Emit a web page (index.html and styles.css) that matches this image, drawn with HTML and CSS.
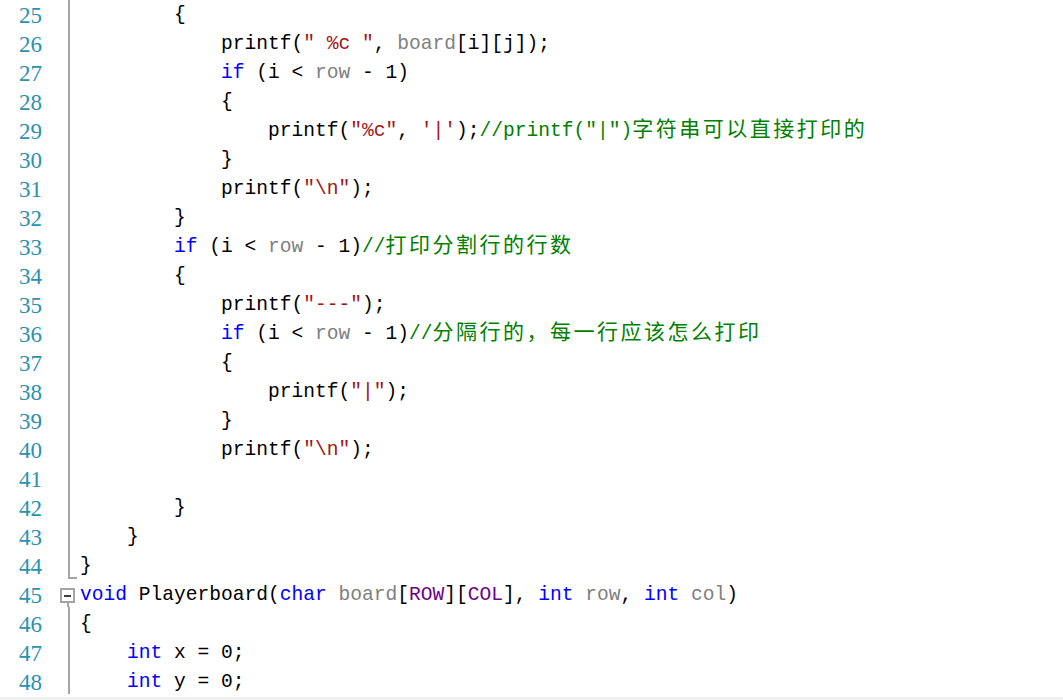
FILE: index.html
```html
<!DOCTYPE html>
<html lang="zh-CN">
<head>
<meta charset="utf-8">
<title>Editor</title>
<link rel="stylesheet" href="styles.css">
</head>
<body>
<div class="editor">
  <div class="row"><span class="ln">25</span><span class="fold"><span class="bar"></span></span><span class="code">        {</span></div>
  <div class="row"><span class="ln">26</span><span class="fold"><span class="bar"></span></span><span class="code">            printf(<span class="s">" %c "</span>, <span class="p">board</span>[i][j]);</span></div>
  <div class="row"><span class="ln">27</span><span class="fold"><span class="bar"></span></span><span class="code">            <span class="k">if</span> (i &lt; <span class="p">row</span> - 1)</span></div>
  <div class="row"><span class="ln">28</span><span class="fold"><span class="bar"></span></span><span class="code">            {</span></div>
  <div class="row"><span class="ln">29</span><span class="fold"><span class="bar"></span></span><span class="code">                printf(<span class="s">"%c"</span>, <span class="s">'|'</span>);<span class="c">//printf("|")<span class="cjk">字符串可以直接打印的</span></span></span></div>
  <div class="row"><span class="ln">30</span><span class="fold"><span class="bar"></span></span><span class="code">            }</span></div>
  <div class="row"><span class="ln">31</span><span class="fold"><span class="bar"></span></span><span class="code">            printf(<span class="s">"\n"</span>);</span></div>
  <div class="row"><span class="ln">32</span><span class="fold"><span class="bar"></span></span><span class="code">        }</span></div>
  <div class="row"><span class="ln">33</span><span class="fold"><span class="bar"></span></span><span class="code">        <span class="k">if</span> (i &lt; <span class="p">row</span> - 1)<span class="c">//<span class="cjk">打印分割行的行数</span></span></span></div>
  <div class="row"><span class="ln">34</span><span class="fold"><span class="bar"></span></span><span class="code">        {</span></div>
  <div class="row"><span class="ln">35</span><span class="fold"><span class="bar"></span></span><span class="code">            printf(<span class="s">"---"</span>);</span></div>
  <div class="row"><span class="ln">36</span><span class="fold"><span class="bar"></span></span><span class="code">            <span class="k">if</span> (i &lt; <span class="p">row</span> - 1)<span class="c">//<span class="cjk">分隔行的，每一行应该怎么打印</span></span></span></div>
  <div class="row"><span class="ln">37</span><span class="fold"><span class="bar"></span></span><span class="code">            {</span></div>
  <div class="row"><span class="ln">38</span><span class="fold"><span class="bar"></span></span><span class="code">                printf(<span class="s">"|"</span>);</span></div>
  <div class="row"><span class="ln">39</span><span class="fold"><span class="bar"></span></span><span class="code">            }</span></div>
  <div class="row"><span class="ln">40</span><span class="fold"><span class="bar"></span></span><span class="code">            printf(<span class="s">"\n"</span>);</span></div>
  <div class="row"><span class="ln">41</span><span class="fold"><span class="bar"></span></span><span class="code"></span></div>
  <div class="row"><span class="ln">42</span><span class="fold"><span class="bar"></span></span><span class="code">        }</span></div>
  <div class="row"><span class="ln">43</span><span class="fold"><span class="bar"></span></span><span class="code">    }</span></div>
  <div class="row"><span class="ln">44</span><span class="fold"><span class="bar end"></span></span><span class="code">}</span></div>
  <div class="row"><span class="ln">45</span><span class="fold"><span class="box"></span><span class="bar tail"></span></span><span class="code"><span class="k">void</span> Playerboard(<span class="k">char</span> <span class="p">board</span>[<span class="m">ROW</span>][<span class="m">COL</span>], <span class="k">int</span> <span class="p">row</span>, <span class="k">int</span> <span class="p">col</span>)</span></div>
  <div class="row"><span class="ln">46</span><span class="fold"><span class="bar"></span></span><span class="code">{</span></div>
  <div class="row"><span class="ln">47</span><span class="fold"><span class="bar"></span></span><span class="code">    <span class="k">int</span> x = 0;</span></div>
  <div class="row"><span class="ln">48</span><span class="fold"><span class="bar"></span></span><span class="code">    <span class="k">int</span> y = 0;</span></div>
</div>
<div class="statusbar"></div>
</body>
</html>
```

FILE: styles.css
```css
html, body {
  margin: 0;
  padding: 0;
  background: #ffffff;
  overflow: hidden;
  width: 1063px;
  height: 700px;
}

body {
  position: relative;
}

.editor {
  display: flex;
  flex-direction: column;
  margin-top: -2px;
  font-family: "Liberation Mono", "Noto Sans CJK SC", monospace;
  font-size: 19.58px;
  color: #000000;
}

.row {
  display: flex;
  height: 29px;
  line-height: 29px;
}

.ln {
  width: 42px;
  flex: none;
  text-align: right;
  color: #2b91af;
  padding-top: 3px;
  font-family: "Liberation Serif", serif;
  font-size: 23px;
}

.fold {
  width: 38px;
  flex: none;
  display: flex;
  flex-direction: column;
  align-items: flex-start;
}

.bar {
  display: block;
  margin-left: 26px;
  width: 2px;
  flex: 1;
  background: #a5a5a5;
}

.bar.end {
  flex: none;
  height: 28px;
  width: 7px;
  background: transparent;
  border-left: 2px solid #a5a5a5;
  border-bottom: 2px solid #a5a5a5;
}

.box {
  display: block;
  margin-left: 18px;
  margin-top: 10px;
  width: 11px;
  height: 11px;
  border: 2px solid #a5a5a5;
  background: linear-gradient(#404040, #404040) center / 7px 2px no-repeat;
  flex: none;
}

.bar.tail {
  margin-left: 25px;
}

.code {
  white-space: pre;
  flex: 1;
  padding-top: 3px;
}

.k { color: #0000ff; }
.s { color: #a31515; }
.p { color: #808080; }
.m { color: #6f008a; }
.c { color: #008000; }

.cjk {
  font-family: "Noto Sans CJK SC", sans-serif;
  font-size: 21px;
  line-height: 1;
  letter-spacing: 2.5px;
}

.statusbar {
  position: absolute;
  left: 0;
  right: 0;
  bottom: 0;
  height: 3px;
  background: #f0f0f0;
}
```
